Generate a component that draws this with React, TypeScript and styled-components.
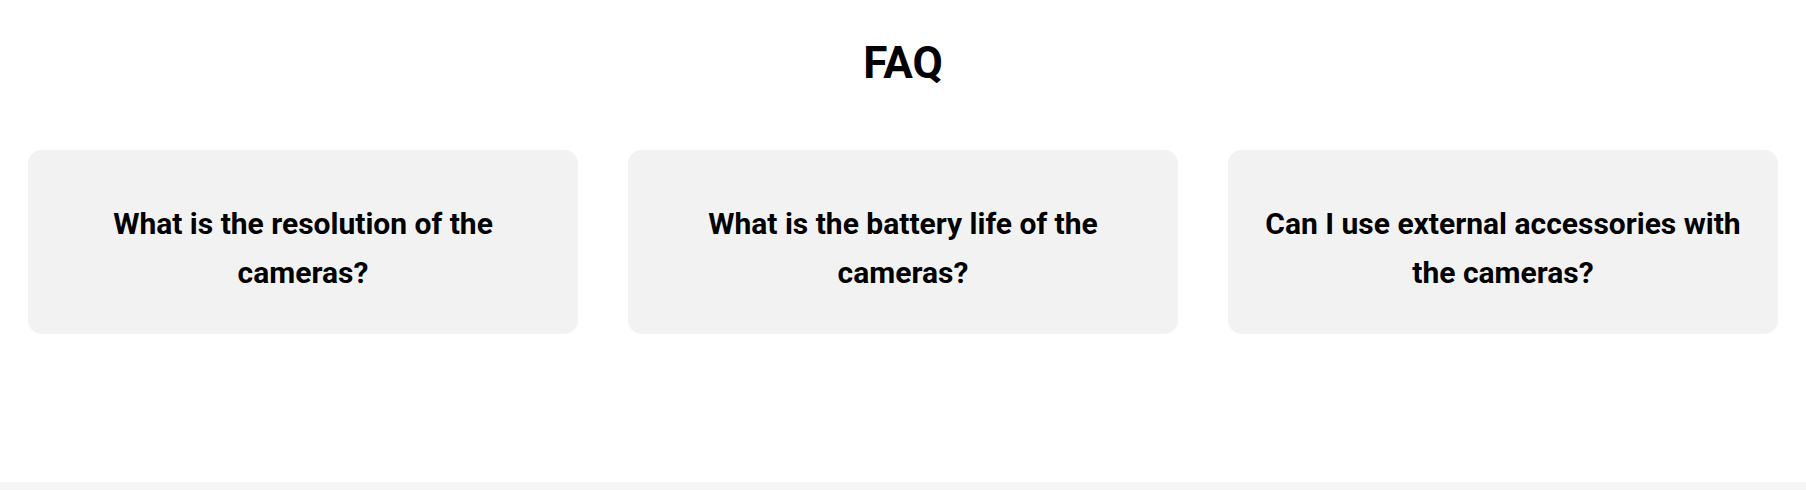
import React from "react";
import styled, { createGlobalStyle } from "styled-components";

const GlobalStyle = createGlobalStyle`
  html, body {
    margin: 0;
    padding: 0;
    background: #ffffff;
    font-family: Roboto, "Liberation Sans", Arial, sans-serif;
    color: #000000;
  }
  * { box-sizing: border-box; }
`;

const Page = styled.div`
  display: flex;
  flex-direction: column;
  min-height: 490px;
`;

const Section = styled.section`
  height: 482px;
  padding: 40px 28px 0;
  display: flex;
  flex-direction: column;
  align-items: stretch;
`;

const Title = styled.h2`
  margin: 0;
  font-family: Roboto, "Liberation Sans", Arial, sans-serif;
  font-size: 44px;
  font-weight: 700;
  line-height: 47px;
  text-align: center;
  color: #000;
`;

const Grid = styled.div`
  margin-top: 63px;
  display: grid;
  grid-template-columns: repeat(3, 1fr);
  gap: 50px;
`;

const Card = styled.div`
  height: 184px;
  background: #f2f2f2;
  border-radius: 14px;
  padding: 49px 30px 0;
  display: flex;
  justify-content: center;
`;

const Question = styled.h3`
  margin: 0;
  font-family: Roboto, "Liberation Sans", Arial, sans-serif;
  font-size: 30px;
  font-weight: 700;
  line-height: 49px;
  text-align: center;
  color: #000;
`;

const Footer = styled.footer`
  flex: 1;
  height: 8px;
  background: #f5f5f5;
`;

const questions = [
  "What is the resolution of the cameras?",
  "What is the battery life of the cameras?",
  "Can I use external accessories with the cameras?",
];

export default function App() {
  return (
    <>
      <GlobalStyle />
      <Page>
        <Section>
          <Title>FAQ</Title>
          <Grid>
            {questions.map((q) => (
              <Card key={q}>
                <Question>{q}</Question>
              </Card>
            ))}
          </Grid>
        </Section>
        <Footer />
      </Page>
    </>
  );
}
